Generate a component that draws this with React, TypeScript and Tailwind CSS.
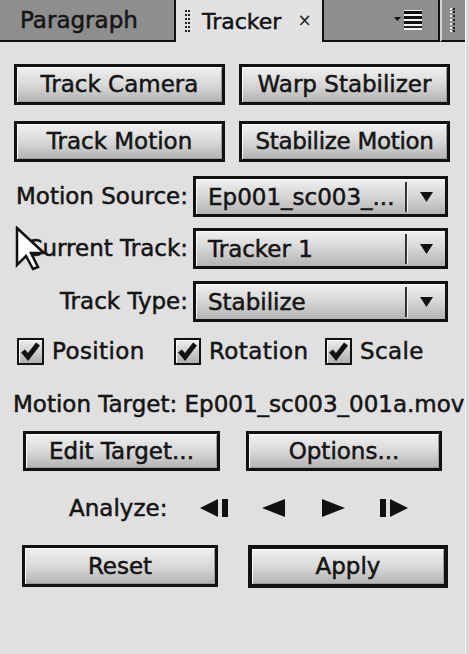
import React from "react";

function Btn({ children, className }: { children: React.ReactNode; className: string }) {
  return (
    <div
      className={
        "flex items-center justify-center bg-linear-to-b from-[#f0f0f0] via-[#d9d9d9] to-[#b3b3b3] shadow-[inset_1px_1px_0_#fbfbfb,inset_-1px_-1px_0_#9c9c9c] text-[23px] leading-none text-[#141414] whitespace-nowrap " +
        className
      }
    >
      {children}
    </div>
  );
}

function Dropdown({ value }: { value: string }) {
  return (
    <div className="ml-[5px] flex h-[41px] w-[255px] items-center border-[3px] border-[#111] bg-linear-to-b from-[#f0f0f0] via-[#d6d6d6] to-[#b3b3b3] shadow-[inset_1px_1px_0_#fbfbfb]">
      <span className="flex-1 pl-[12px] text-[23px] leading-[28px] text-[#141414] whitespace-nowrap">{value}</span>
      <div className="h-[30px] w-[3px] shrink-0 border-l-2 border-[#333] bg-[#f4f4f4]" />
      <div className="flex w-[37px] shrink-0 justify-center">
        <svg width="13" height="10" viewBox="0 0 13 10">
          <polygon points="0,0 13,0 6.5,10" fill="#111" />
        </svg>
      </div>
    </div>
  );
}

function Check() {
  return (
    <div className="h-[27px] w-[27px] shrink-0 border-2 border-[#111] bg-linear-to-b from-[#eeeeee] to-[#b0b0b0] shadow-[inset_1px_1px_0_#fafafa]">
      <svg width="23" height="23" viewBox="0 0 23 23">
        <polyline points="4,11 9,17 19,4" fill="none" stroke="#111" strokeWidth="5" strokeLinejoin="miter" />
      </svg>
    </div>
  );
}

export default function App() {
  return (
    <div className="relative flex h-[654px] w-[469px] overflow-hidden bg-[#d9d9d9] font-['DejaVu_Sans',Verdana,sans-serif] text-[#141414] [-webkit-text-stroke:0.5px_#141414]">
      <div className="flex h-full w-[465px] flex-col bg-[#e0e0e0]">
        {/* Tab bar */}
        <div className="flex h-[42px] shrink-0">
          <div className="flex w-[174px] items-center border-b-2 border-[#111] bg-[#8e8e8e] pl-[20px] text-[23px] text-[#161616]">
            Paragraph
          </div>
          <div className="flex w-[150px] items-center border-x-2 border-[#111] bg-[#e2e2e2]">
            <div className="ml-[9px] flex h-[22px] gap-[1px]">
              <div className="h-full border-l-2 border-dotted border-[#222]" />
              <div className="h-full border-l-2 border-dotted border-[#222]" />
            </div>
            <span className="ml-[12px] text-[22px] text-[#111]">Tracker</span>
            <span className="ml-[16px] text-[17px] text-[#222] [-webkit-text-stroke:0px]">×</span>
          </div>
          <div className="flex w-[116px] items-center justify-end border-r-2 border-b-2 border-[#111] bg-[#8e8e8e] pr-[15px]">
            <svg width="31" height="20" viewBox="0 0 31 20">
              <polygon points="2,7 9,7 5.5,11" fill="#111" />
              <rect x="12" y="0" width="18" height="20" fill="#f2f2f2" />
              <rect x="12" y="1" width="18" height="3" fill="#111" />
              <rect x="12" y="6" width="18" height="3" fill="#111" />
              <rect x="12" y="11" width="18" height="3" fill="#111" />
              <rect x="12" y="16" width="18" height="2" fill="#222" />
            </svg>
          </div>
          <div className="flex flex-1 items-center border-l-2 border-b-2 border-l-[#d4d4d4] border-b-[#111] bg-[#8e8e8e] pl-[8px]">
            <div className="flex h-[24px] gap-[1px]">
              <div className="h-full border-l-2 border-dotted border-[#f0f0f0]" />
              <div className="h-full border-l-2 border-dotted border-[#222]" />
            </div>
          </div>
        </div>

        {/* Row 1 */}
        <div className="mt-[22px] ml-[14px] flex gap-[14px]">
          <Btn className="h-[41px] w-[211px] border-[3px] border-[#111]">Track Camera</Btn>
          <Btn className="h-[41px] w-[211px] border-[3px] border-[#111]">Warp Stabilizer</Btn>
        </div>
        <div className="mt-[16px] ml-[14px] flex gap-[14px]">
          <Btn className="h-[41px] w-[211px] border-[3px] border-[#111]">Track Motion</Btn>
          <Btn className="h-[41px] w-[211px] border-[3px] border-[#111] tracking-[-0.3px]">Stabilize Motion</Btn>
        </div>

        {/* Dropdowns */}
        <div className="mt-[14px] flex items-center">
          <span className="w-[188px] text-right text-[23px] whitespace-nowrap">Motion Source:</span>
          <Dropdown value="Ep001_sc003_..." />
        </div>
        <div className="mt-[11px] flex items-center">
          <span className="w-[188px] text-right text-[23px] whitespace-nowrap">Current Track:</span>
          <Dropdown value="Tracker 1" />
        </div>
        <div className="mt-[12px] flex items-center">
          <span className="w-[188px] text-right text-[23px] whitespace-nowrap">Track Type:</span>
          <Dropdown value="Stabilize" />
        </div>

        {/* Checkboxes */}
        <div className="mt-[16px] ml-[17px] flex h-[27px] items-center text-[23px] tracking-[0.4px]">
          <div className="flex w-[157px] items-center gap-[8px]">
            <Check />
            <span>Position</span>
          </div>
          <div className="flex w-[151px] items-center gap-[8px]">
            <Check />
            <span>Rotation</span>
          </div>
          <div className="flex items-center gap-[8px]">
            <Check />
            <span>Scale</span>
          </div>
        </div>

        {/* Motion target */}
        <div className="mt-[26px] flex h-[26px] items-center pl-[13px] text-[23px] whitespace-nowrap">
          Motion Target: Ep001_sc003_001a.mov
        </div>

        {/* Edit target / options */}
        <div className="mt-[14px] flex">
          <Btn className="ml-[23px] h-[40px] w-[197px] border-[3px] border-[#111]">Edit Target...</Btn>
          <Btn className="ml-[26px] h-[40px] w-[196px] border-[3px] border-[#111]">Options...</Btn>
        </div>

        {/* Analyze */}
        <div className="mt-[26px] flex h-[22px] items-center">
          <span className="ml-[69px] w-[131px] text-[23px]">Analyze:</span>
          <svg width="28" height="18" viewBox="0 0 28 18">
            <polygon points="0,9 18,0 18,18" fill="#111" />
            <rect x="22" y="0" width="6" height="18" fill="#111" />
          </svg>
          <svg className="ml-[34px]" width="23" height="18" viewBox="0 0 23 18">
            <polygon points="0,9 23,0 23,18" fill="#111" />
          </svg>
          <svg className="ml-[37px]" width="23" height="18" viewBox="0 0 23 18">
            <polygon points="0,0 23,9 0,18" fill="#111" />
          </svg>
          <svg className="ml-[35px]" width="28" height="18" viewBox="0 0 28 18">
            <rect x="0" y="0" width="6" height="18" fill="#111" />
            <polygon points="10,0 28,9 10,18" fill="#111" />
          </svg>
        </div>

        {/* Reset / Apply */}
        <div className="mt-[26px] flex items-start">
          <Btn className="ml-[22px] h-[42px] w-[196px] border-[3px] border-[#111]">Reset</Btn>
          <Btn className="ml-[30px] h-[43px] w-[200px] border-[4px] border-[#111]">Apply</Btn>
        </div>
      </div>
      <div className="h-full w-[1px] bg-[#f6f6f6]" />

      {/* mouse cursor */}
      <svg className="absolute left-[15px] top-[226px]" width="32" height="46" viewBox="0 0 32 46">
        <polygon
          points="2,2 2,39 11,30 18,43 23,41 16,27 29,27"
          fill="#ffffff"
          stroke="#111"
          strokeWidth="2.5"
          strokeLinejoin="miter"
        />
      </svg>
    </div>
  );
}
